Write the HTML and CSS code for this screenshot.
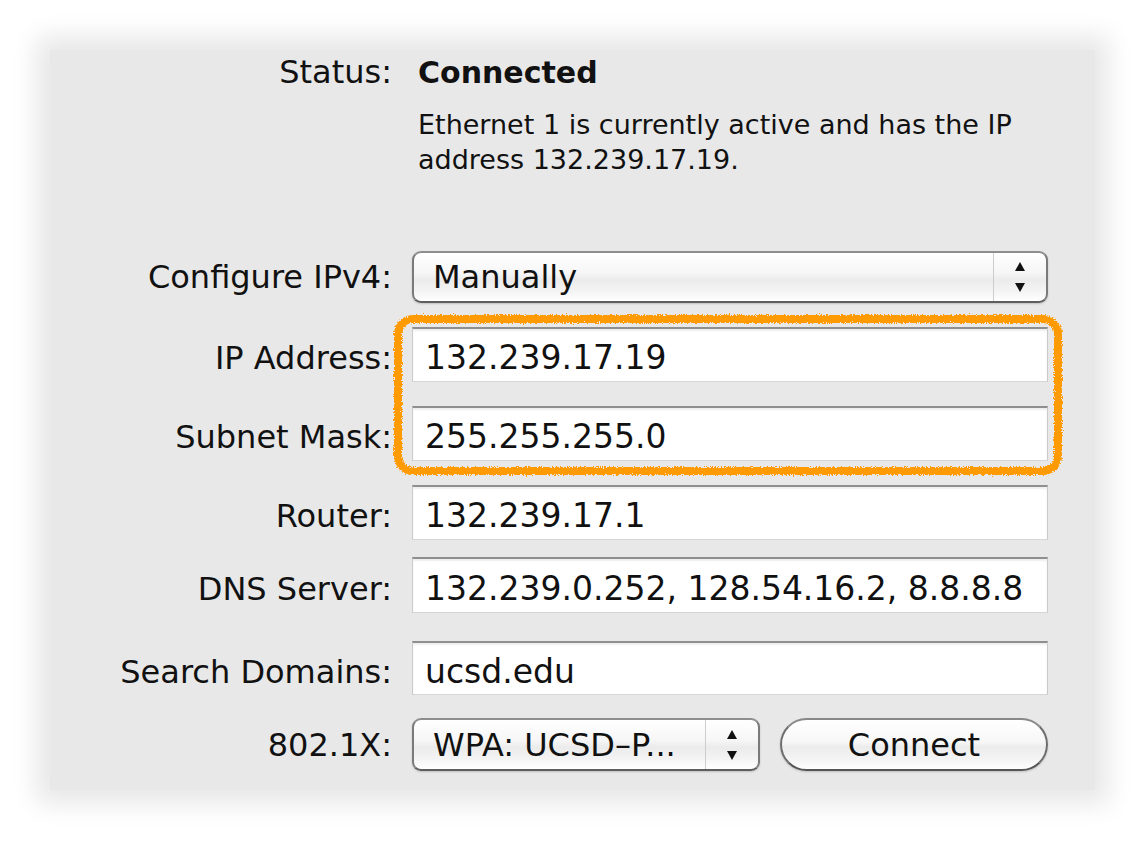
FILE: index.html
```html
<!DOCTYPE html>
<html>
<head>
<meta charset="utf-8">
<link rel="stylesheet" href="styles.css">
</head>
<body>
<div class="page">
<div class="panel">
  <div class="row">
    <div class="label">Status:</div>
    <div class="ctl status-value">Connected</div>
  </div>
  <div class="row row-desc">
    <div class="label"></div>
    <div class="ctl desc">Ethernet 1 is currently active and has the IP address 132.239.17.19.</div>
  </div>
  <div class="row row-config">
    <div class="label">Configure IPv4:</div>
    <div class="ctl popup">
      <span class="popup-text">Manually</span>
      <span class="popup-arrows">
        <svg width="12" height="32" viewBox="0 0 12 32"><path d="M6 1 L11 10 L1 10 Z" fill="#111"/><path d="M1 22 L11 22 L6 31 Z" fill="#111"/></svg>
      </span>
    </div>
  </div>
  <div class="highlight-group">
    <div class="row">
      <div class="label">IP Address:</div>
      <div class="ctl field">132.239.17.19</div>
    </div>
    <div class="row row-subnet">
      <div class="label">Subnet Mask:</div>
      <div class="ctl field">255.255.255.0</div>
    </div>
    <svg class="highlight" width="672" height="164" viewBox="0 0 672 164">
      <defs>
        <filter id="rough" x="-5%" y="-10%" width="110%" height="120%">
          <feTurbulence type="fractalNoise" baseFrequency="0.7" numOctaves="2" seed="3" result="n"/>
          <feDisplacementMap in="SourceGraphic" in2="n" scale="5" xChannelSelector="R" yChannelSelector="G"/>
        </filter>
      </defs>
      <rect x="6" y="6" width="660" height="152" rx="15" ry="15" fill="none" stroke="#ff9a00" stroke-width="8" filter="url(#rough)"/>
    </svg>
  </div>
  <div class="row row-router">
    <div class="label">Router:</div>
    <div class="ctl field">132.239.17.1</div>
  </div>
  <div class="row row-dns">
    <div class="label">DNS Server:</div>
    <div class="ctl field field-dns">132.239.0.252, 128.54.16.2, 8.8.8.8</div>
  </div>
  <div class="row row-search">
    <div class="label">Search Domains:</div>
    <div class="ctl field field-search">ucsd.edu</div>
  </div>
  <div class="row row-8021x">
    <div class="label">802.1X:</div>
    <div class="controls">
      <div class="popup popup-small">
        <span class="popup-text">WPA: UCSD–P...</span>
        <span class="popup-arrows">
          <svg width="12" height="32" viewBox="0 0 12 32"><path d="M6 1 L11 10 L1 10 Z" fill="#111"/><path d="M1 22 L11 22 L6 31 Z" fill="#111"/></svg>
        </span>
      </div>
      <div class="button">Connect</div>
    </div>
  </div>
</div>
</div>
</body>
</html>
```

FILE: styles.css
```css
html, body {
  margin: 0;
  background: #ffffff;
}

body {
  font-family: "DejaVu Sans", "Liberation Sans", sans-serif;
  color: #111111;
}

.page {
  padding: 50px 0 54px 50px;
}

.panel {
  box-sizing: border-box;
  width: 1045px;
  height: 740px;
  padding-top: 2px;
  background: #e8e8e8;
  box-shadow: 0 0 24px 14px #e8e8e8;
}

.row {
  display: flex;
  align-items: baseline;
}

.label {
  flex: none;
  width: 342px;
  margin-right: 20px;
  text-align: right;
  font-size: 32px;
  line-height: 40px;
  white-space: nowrap;
}

.ctl {
  flex: none;
  width: 636px;
  box-sizing: border-box;
}

.status-value {
  padding-left: 6px;
  font-weight: bold;
  font-size: 30px;
  line-height: 40px;
}

.row-desc {
  margin-top: 14px;
}

.desc {
  padding-left: 6px;
  font-size: 27px;
  line-height: 35px;
}

.row-config {
  margin-top: 74px;
}

.popup {
  box-sizing: border-box;
  height: 52px;
  display: flex;
  align-items: center;
  border: 2px solid #7a7a7a;
  border-top-color: #8e8e8e;
  border-bottom-color: #5e5e5e;
  border-radius: 9px;
  background: linear-gradient(#ffffff 0%, #f6f6f6 42%, #ebebeb 56%, #f4f4f4 80%, #ffffff 100%);
  box-shadow: 0 1px 2px rgba(0, 0, 0, 0.18);
}

.popup-text {
  padding-left: 19px;
  font-size: 32px;
  line-height: 40px;
  white-space: nowrap;
}

.popup-arrows {
  margin-left: auto;
  width: 52px;
  height: 100%;
  border-left: 1px solid #cdcdcd;
  display: flex;
  align-items: center;
  justify-content: center;
}

.popup-arrows svg {
  display: block;
}

.highlight-group {
  position: relative;
  margin-top: 24px;
}

.highlight {
  position: absolute;
  left: 342px;
  top: -14px;
}

.field {
  height: 55px;
  padding: 9px 0 0 12px;
  background: #ffffff;
  border: 1px solid #cacaca;
  border-top: 2px solid #8f8f8f;
  border-bottom-color: #d6d6d6;
  box-shadow: inset 0 2px 2px rgba(0, 0, 0, 0.07);
  font-size: 33px;
  line-height: 40px;
  white-space: nowrap;
  overflow: hidden;
}

.row-subnet {
  margin-top: 24px;
}

.row-router {
  margin-top: 24px;
}

.row-dns {
  margin-top: 17px;
}

.field-dns {
  height: 56px;
  padding-top: 10px;
}

.row-search {
  margin-top: 28px;
}

.field-search {
  height: 54px;
}

.row-8021x {
  margin-top: 23px;
}

.controls {
  display: flex;
  align-items: baseline;
  gap: 20px;
  width: 636px;
}

.popup-small {
  width: 348px;
  height: 53px;
}

.button {
  box-sizing: border-box;
  width: 268px;
  height: 53px;
  display: flex;
  align-items: center;
  justify-content: center;
  border: 2px solid #6e6e6e;
  border-top-color: #888888;
  border-bottom-color: #555555;
  border-radius: 27px;
  background: linear-gradient(#ffffff 0%, #f7f7f7 45%, #ececec 55%, #f6f6f6 85%, #ffffff 100%);
  box-shadow: 0 1px 2px rgba(0, 0, 0, 0.18);
  font-size: 32px;
  line-height: 40px;
}
```
